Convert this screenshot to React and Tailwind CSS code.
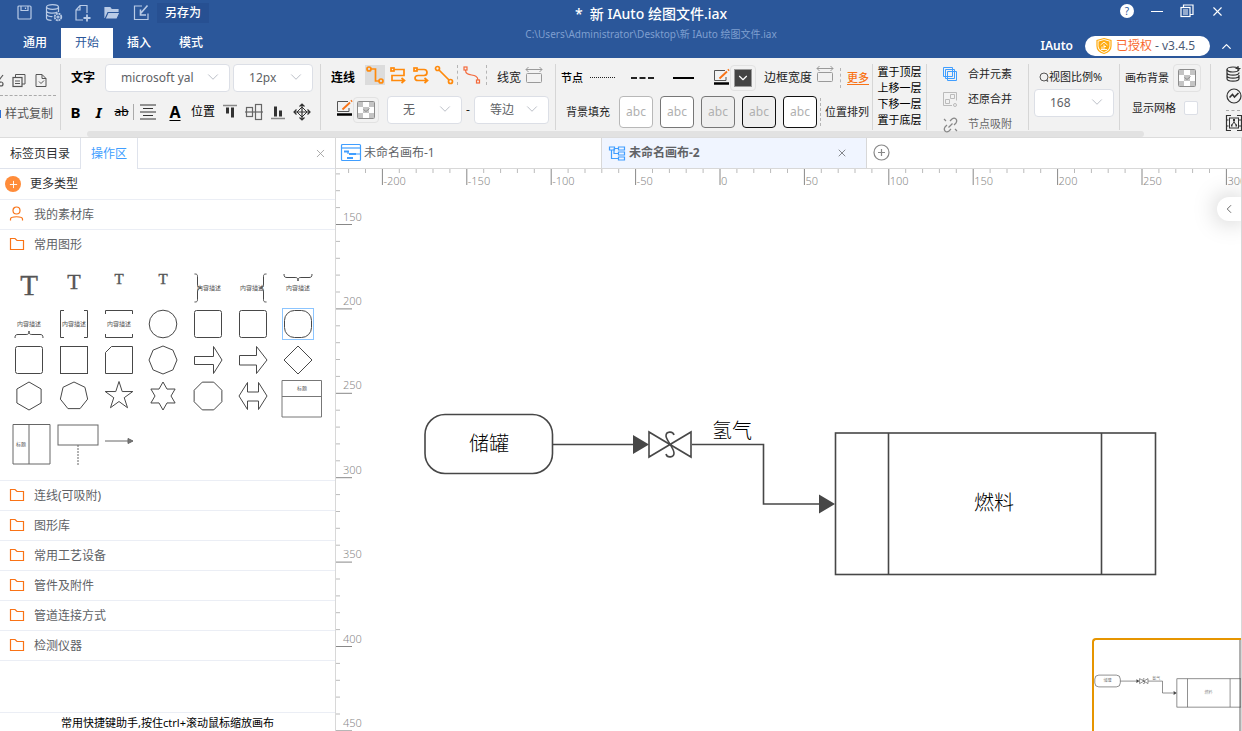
import React, { useState } from 'react'
import { ChevronDown, ChevronUp, ChevronLeft, X, Plus } from 'lucide-react'

const ORIGIN_X = 384
const SCALE = 1.688

// Small stroke icon, drawn in its own box
const Icon = ({ w = 18, h = 18, className = '', children }) => (
  <svg
    width={w}
    height={h}
    viewBox={`0 0 ${w} ${h}`}
    fill="none"
    stroke="currentColor"
    strokeWidth="1.2"
    className={`shrink-0 overflow-visible ${className}`}
    aria-hidden="true"
  >
    {children}
  </svg>
)

const Select = ({ id, label, value, options = [], className = '' }) => (
  <div className={`relative h-7 shrink-0 ${className}`}>
    <select
      id={id}
      aria-label={label}
      defaultValue={value}
      className="h-full w-full appearance-none rounded border border-[#dcdfe6] bg-white pl-[15px] text-xs leading-5 text-[#606266]"
    >
      {[value, ...options].map((o) => (
        <option key={o}>{o}</option>
      ))}
    </select>
    <ChevronDown size={18} strokeWidth={1.2} className="pointer-events-none absolute right-2 top-1 text-[#b4b9c2]" />
  </div>
)

const Group = ({ className = '', children }) => (
  <div className={`h-[66px] shrink-0 border-r border-[#d6d6d6] ${className}`}>{children}</div>
)

const DashSep = ({ className = '' }) => (
  <span className={`h-5 w-px shrink-0 border-l border-dashed border-[#b5b5b5] ${className}`} />
)

const PenIcon = () => (
  <Icon w={17} h={17}>
    <path d="M12 1.500H1.500V11.500H13V8" stroke="#555" strokeWidth="1" />
    <path d="M6.500 9.500L14 2.500" stroke="#f97316" strokeWidth="1.800" />
    <path d="M15 1.500L16 .5" stroke="#f97316" strokeWidth="1.800" />
    <path d="M1 14.500H16" stroke="#000" strokeWidth="2.500" />
  </Icon>
)

const Checker = () => (
  <Icon w={18} h={18}>
    <rect x=".5" y=".5" width="17" height="17" rx="1" fill="#fff" stroke="#8c8c8c" strokeWidth="1" />
    <path d="M1 1h5v5H1zM12 1h5v5h-5zM6 6h6v6H6zM1 12h5v5H1zM12 12h5v5h-5z" fill="#c4c4c4" stroke="none" />
    <path d="M6.500 8.500L9 10.500l3.500-3" stroke="#8c8c8c" strokeWidth="1" />
  </Icon>
)

const WidthIcon = () => (
  <Icon w={18} h={17} className="text-[#9a9a9a]">
    <path d="M1 2.500H17M3.500 0L1 2.500l2.500 2.500M14.500 0L17 2.500l-2.500 2.500" strokeWidth="1" />
    <rect x="1.500" y="6.500" width="15" height="9" rx="1" strokeWidth="1" />
  </Icon>
)

const TopBar = () => {
  const menus = ['通用', '开始', '插入', '模式']
  const [menu, setMenu] = useState('开始')
  const quick = [
    { name: '保存', icon: <><rect x="2" y="2" width="13" height="13" rx="1" /><path d="M5 2v4.500h7V2M9.500 3.500v1.500" /></> },
    { name: '数据', icon: <><ellipse cx="7.500" cy="3" rx="6" ry="2.300" /><path d="M1.500 3v11c0 1.300 2 2.300 5 2.300M13.500 3v5M1.500 7c.8 2.500 8 2.800 11 1M1.500 10.500c.8 1.700 4 2.300 6 2" /><circle cx="13" cy="13" r="3.300" strokeWidth="1.800" strokeDasharray="2 .6" /><circle cx="13" cy="13" r="1" /></> },
    { name: '新建', icon: <><path d="M9 16H2V6l4-4.500h7V9M6 1.500V6H2" /><path d="M13 10.500v7M9.500 14h7" strokeWidth="1.800" /></> },
    { name: '打开', icon: <><path d="M2 14V3.500h5l1.500 2H15V8H5z" fill="currentColor" /><path d="M2 15L5 8.500h12L14 15z" fill="currentColor" stroke="#2b579a" /></> },
    { name: '导入', icon: <><path d="M10 2H2.500v13.500H16V9.500" /><path d="M15.500 1.500L9 9M8.500 5.500v5.500h5.500" strokeWidth="1.600" /></> },
  ]
  return (
    <header className="flex h-[58px] shrink-0 bg-[#2b579a] text-white">
      <div className="flex w-[360px] shrink-0 flex-col">
        <div className="flex h-[26px] items-center pl-2.5">
          {quick.map((q) => (
            <button key={q.name} aria-label={q.name} className="flex w-[29px] justify-center text-[#b9cbe6]">
              <Icon>{q.icon}</Icon>
            </button>
          ))}
          <button className="ml-0.5 h-5 w-[52px] bg-[#275092] text-xs leading-5 font-medium">另存为</button>
        </div>
        <nav className="mt-0.5 flex flex-1 pl-[9px]">
          {menus.map((m) => (
            <button
              key={m}
              onClick={() => setMenu(m)}
              className={`w-[52px] text-xs leading-5 ${menu === m ? 'bg-white text-[#2b579a]' : 'font-medium text-white'}`}
            >
              {m}
            </button>
          ))}
        </nav>
      </div>
      <div className="min-w-0 flex-1 pt-1 text-center">
        <h1 className="truncate text-sm leading-5 font-medium whitespace-pre">*  新 IAuto 绘图文件.iax</h1>
        <p className="truncate text-[10px] leading-5 text-[#7f9fd0]">C:\Users\Administrator\Desktop\新 IAuto 绘图文件.iax</p>
      </div>
      <div className="flex w-[300px] shrink-0 flex-col">
        <div className="flex h-[22px] items-center justify-end pr-2.5">
          <button aria-label="帮助" className="flex w-[30px] justify-center">
            <span className="h-3.5 w-3.5 rounded-full bg-white text-[10px] leading-3.5 text-[#2b579a]">?</span>
          </button>
          <button aria-label="最小化" className="flex w-[30px] justify-center">
            <span className="h-px w-3 bg-white" />
          </button>
          <button aria-label="还原" className="flex w-[30px] justify-center">
            <Icon w={14} h={14}>
              <rect x="1" y="3.500" width="9" height="9" />
              <path d="M3.500 3.500V1h9.500v9.500h-3M3 6h5M3 8h5M3 10h5" />
            </Icon>
          </button>
          <button aria-label="关闭" className="flex w-[30px] justify-center">
            <X size={15} strokeWidth={1.8} />
          </button>
        </div>
        <div className="flex flex-1 items-center justify-end pt-3">
          <span className="text-xs leading-5 font-semibold">IAuto</span>
          <span className="ml-3 flex h-5 w-[125px] items-center justify-center gap-1 rounded-full bg-white pr-1 text-xs leading-5 text-[#4a5a75]">
            <Icon w={16} h={16}>
              <path d="M8 .5L15 2.500V8c0 4-3.500 6.500-7 7.500C4.500 14.500 1 12 1 8V2.500z" fill="#fff" stroke="#ffab0f" />
              <path d="M8 2L13.500 3.500V8c0 3-2.800 5-5.500 6C5.300 13 2.500 11 2.500 8V3.500z" fill="#ffab0f" stroke="none" />
              <path d="M4.500 7L8 4l3.500 3M8 6.500v5M8 8.500h2M6 8.500v3M5 11.500h6" stroke="#fff" strokeWidth=".9" />
            </Icon>
            <span>
              <span className="text-[#f9682c]">已授权</span> - v3.4.5
            </span>
          </span>
          <button aria-label="收起" className="flex w-8 justify-center">
            <ChevronUp size={15} strokeWidth={2} />
          </button>
        </div>
      </div>
    </header>
  )
}

const FORMATS = [
  { name: '顶部对齐', d: <><path d="M1 1.500h14" stroke="#888" strokeWidth="1.500" /><path d="M5.500 3.500v6M10.500 3.500v10" strokeWidth="3" /></> },
  { name: '居中对齐', d: <g stroke="#666"><rect x=".5" y="3.500" width="6" height="9" /><rect x="9.500" y=".5" width="6" height="15" /><path d="M-1 8h18" /></g> },
  { name: '底部对齐', d: <><path d="M1 14.500h14" stroke="#888" strokeWidth="1.500" /><path d="M5.500 2.500v10M10.500 6.500v6" strokeWidth="3" /></> },
  { name: '移动', d: <><path d="M8 0v16M0 8h16M5.500 2.500L8 0l2.500 2.500M5.500 13.500L8 16l2.500-2.500M2.500 5.500L0 8l2.500 2.500M13.500 5.500L16 8l-2.500 2.500" /><path d="M8 3l5 5-5 5-5-5z" strokeWidth="1" /></> },
]

const LINES = [
  { name: '折线', d: <><circle cx="3" cy="3" r="2" /><path d="M5 3h4.500v12H13" /><circle cx="15" cy="15" r="2" /></> },
  { name: '直角线', d: <><rect x="2" y="2" width="3" height="3" /><path d="M5 3.500h10v6H3v5h12M12.500 12l3 2.500-3 2.500" /></> },
  { name: '圆角线', d: <><rect x="2" y="2" width="3" height="3" /><path d="M5 3.500h7c4 0 4 6 0 6H6c-4 0-4 5 0 5h9M12.500 12l3 2.500-3 2.500" /></> },
  { name: '直线', d: <><circle cx="2.500" cy="2.500" r="2" /><path d="M4 4l10 10" /><circle cx="15.500" cy="15.500" r="2" /></> },
]

const BOXES = [
  'border-[#b8b8b8] bg-white',
  'border-[#777] bg-white',
  'border-[#777] bg-[#efefef]',
  'border-[#111] bg-[#efefef]',
  'border-[#111] bg-white',
]

const Ribbon = () => (
  <section className="shrink-0 overflow-hidden border-b border-[#dcdcdc] bg-[#f2f2f2] text-xs leading-4 text-[#222]">
    <div className="flex pt-1.5">
      <Group className="flex w-[61px] flex-col">
        <div className="mr-1 flex h-8 items-end gap-2 border-b border-dashed border-[#aaa] pb-2 text-[#555]">
          <button aria-label="剪切" className="w-1 overflow-hidden">
            <Icon w={4} h={14}><circle cx="1" cy="11" r="2" /><path d="M-4 11L3 2" /></Icon>
          </button>
          <button aria-label="复制">
            <Icon w={14} h={14}><rect x="1" y="4.500" width="9" height="9" /><path d="M3.500 4V1.500H13V11h-3M3 8h5M3 10.500h5" strokeWidth="1" /></Icon>
          </button>
          <button aria-label="粘贴">
            <Icon w={14} h={14}><path d="M2 1.500h6l4 4v8H2zM8 1.500v4h4M5 8.500l2 2 3-3" strokeWidth="1" /></Icon>
          </button>
        </div>
        <button className="mt-2.5 flex items-center text-[#555]">
          <span className="mr-1 h-2 w-px bg-[#2b6fd6]" />
          样式复制
        </button>
      </Group>

      <Group className="flex w-[260px] flex-col gap-1.5">
        <div className="flex items-center gap-[3px] pl-2.5">
          <span className="mr-[7px] font-semibold text-black">文字</span>
          <Select label="字体" value="microsoft yal" options={['宋体']} className="w-[125px]" />
          <Select label="字号" value="12px" options={['14px']} className="w-20" />
        </div>
        <div className="flex h-7 items-center pl-[3px] text-[#333]">
          <button className="w-[23px] text-[15px] font-bold text-black">B</button>
          <button className="w-[23px] text-[15px] font-bold text-black italic">I</button>
          <button className="w-[23px] text-xs text-black line-through">ab</button>
          <span className="h-4 w-px bg-[#aaa]" />
          <button aria-label="对齐" className="flex w-7 justify-center">
            <Icon w={16} h={16}><path d="M0 1h16M3 4.500h10M0 8h16M3 11.500h10M0 15h16" /></Icon>
          </button>
          <button className="w-[26px] text-base font-bold text-black underline underline-offset-2">A</button>
          <span className="w-[30px] text-center text-black">位置</span>
          {FORMATS.map((f) => (
            <button key={f.name} aria-label={f.name} className="flex w-6 justify-center">
              <Icon w={16} h={16}>{f.d}</Icon>
            </button>
          ))}
        </div>
      </Group>

      <Group className="flex w-[235px] flex-col gap-1">
        <div className="flex h-7 items-center pl-2.5">
          <span className="mr-2.5 font-semibold text-black">连线</span>
          {LINES.map((l, i) => (
            <button
              key={l.name}
              aria-label={l.name}
              className={`mr-[3px] mb-1.5 flex h-5 w-5 items-center justify-center text-[#ff8a0c] ${i === 0 ? 'bg-[#dcdcdc]' : ''}`}
            >
              <Icon className="[stroke-width:1.700]">{l.d}</Icon>
            </button>
          ))}
          <DashSep className="mb-1.5" />
          <button aria-label="曲线" className="mx-1 mb-1.5 flex w-5 justify-center text-[#f4693b]">
            <Icon><rect x="1" y="1" width="3" height="3" /><path d="M2.500 4c0 8 12 2 12.500 10" /><rect x="13.500" y="14" width="3" height="3" /></Icon>
          </button>
          <DashSep className="mb-1.5" />
          <span className="mr-1 ml-2.5">线宽</span>
          <button aria-label="线宽" className="mb-1.5"><WidthIcon /></button>
        </div>
        <div className="flex items-center pl-[15px]">
          <button aria-label="线条颜色" className="mb-1"><PenIcon /></button>
          <button aria-label="填充" className="flex h-[26px] w-[26px] items-center justify-center rounded border border-[#e2e2e2]">
            <Checker />
          </button>
          <Select label="起点" value="无" options={['箭头']} className="ml-2 w-[75px]" />
          <span className="w-3 text-center">-</span>
          <Select label="终点" value="等边" options={['无']} className="w-[75px]" />
        </div>
      </Group>

      <Group className="flex w-[317px] flex-col gap-1">
        <div className="flex h-[27px] items-center pl-[5px]">
          <span className="w-[29px] text-[11px] font-medium text-black">节点</span>
          <button aria-label="点线" className="w-[25px] border-t border-dotted border-[#222]" />
          <button aria-label="虚线" className="ml-4 w-[23px] border-t-2 border-dashed border-[#222]" />
          <button aria-label="实线" className="ml-[19px] w-[21px] border-t-2 border-black" />
          <span className="w-[19px]" />
          <button aria-label="边框颜色"><PenIcon /></button>
          <button aria-label="颜色" className="flex h-[26px] w-[26px] items-center justify-center rounded border border-[#e2e2e2]">
            <span className="flex h-[18px] w-[18px] items-center justify-center border border-[#999] bg-[#444] text-white">
              <ChevronDown size={14} />
            </span>
          </button>
          <span className="mr-1 ml-2">边框宽度</span>
          <button aria-label="边框宽度" className="mb-1.5"><WidthIcon /></button>
          <DashSep className="mx-1.5 h-4" />
          <a href="#more" className="text-[11px] font-medium text-[#f97316] underline underline-offset-2">更多</a>
        </div>
        <div className="flex items-center pt-px pl-2.5 text-[11px]">
          <span className="mr-[9px]">背景填充</span>
          <div className="flex gap-[7px]">
            {BOXES.map((b, i) => (
              <button key={i} className={`h-8 w-[34px] rounded border text-xs text-[#b0b0b0] ${b}`}>abc</button>
            ))}
          </div>
          <DashSep className="mr-1 ml-[3px] h-7" />
          <span className="shrink-0">位置排列</span>
        </div>
      </Group>

      <Group className="flex w-[54px] flex-col items-center text-[11px]">
        {['置于顶层', '上移一层', '下移一层', '置于底层'].map((t) => (
          <button key={t} className="h-4 text-black">{t}</button>
        ))}
      </Group>

      <Group className="flex w-[102px] flex-col gap-[9px] pt-0.5 pl-4 text-[11px]">
        <button className="flex h-4 items-center gap-2.5">
          <Icon w={15} h={15} className="text-[#409eff]">
            <path d="M.5 .5h9v9h-9zM2.500 2.500h9v9h-9zM4.500 4.500h9v9h-9z" strokeWidth="1" />
          </Icon>
          合并元素
        </button>
        <button className="flex h-4 items-center gap-2.5">
          <Icon w={15} h={15} className="text-[#bbb]">
            <path d="M9 13.500H.5V.5h13v8M2.500 7.500h4v4h-4zM7.500 2.500h4v4h-4z" strokeWidth="1" />
            <circle cx="12" cy="13" r="1.500" strokeWidth="1" />
          </Icon>
          还原合并
        </button>
        <button className="flex h-4 items-center gap-2.5 text-[#666]">
          <Icon w={15} h={15} className="text-[#888]">
            <path d="M7 4l2-2c3-2.500 6 1 4 4l-2 2M8 12l-2 2c-3 2.500-6-1-4-4l2-2M5.500 10.500l4-4M1 2l2 2M12 12l2 2" />
          </Icon>
          节点吸附
        </button>
      </Group>

      <Group className="flex w-[91px] flex-col pl-[5px] text-[11px]">
        <label htmlFor="zoom" className="flex h-[25px] items-center pl-[5px]">
          <Icon w={10} h={10} className="text-[#555]"><circle cx="5" cy="5" r="4" strokeWidth="1" /><path d="M7.500 8L9 9.500" /></Icon>
          视图比例%
        </label>
        <Select id="zoom" label="视图比例%" value="168" options={['100']} className="w-20" />
      </Group>

      <Group className="flex w-[91px] flex-col gap-2 pl-[5px] text-[11px]">
        <div className="flex items-center gap-1">
          画布背景
          <button aria-label="画布背景" className="flex h-7 w-7 items-center justify-center rounded border border-[#e2e2e2]">
            <Checker />
          </button>
        </div>
        <label className="flex items-center gap-2 pl-[7px]">
          显示网格
          <input type="checkbox" className="h-3.5 w-3.5 appearance-none rounded-xs border border-[#dcdfe6] bg-white" />
        </label>
      </Group>

      <div className="flex w-10 shrink-0 flex-col gap-1.5 pl-[15px] text-[#333]">
        <button aria-label="数据源" className="mt-0.5">
          <Icon w={16} h={16}><ellipse cx="7" cy="3.500" rx="6" ry="2.500" /><path d="M1 3.500v9c0 3.500 12 3.500 12 0V9M1 6.500c0 3.500 12 3.500 12 0M1 9.500c0 3.500 12 3.500 12 0M12 0v5M9.500 2.500h5" /></Icon>
        </button>
        <button aria-label="图表">
          <Icon w={16} h={16}><circle cx="8" cy="8" r="7" /><path d="M3.500 9.500l3-3 2 2.500 4-4" strokeWidth="1.600" /></Icon>
        </button>
        <button aria-label="组件" className="border-t border-dashed border-[#aaa] pt-1">
          <Icon w={16} h={16}><path d="M5 .5H.5v15h4.500M11 .5h4.500v15h-4.500M.5 5h2M.5 11h2M13 5h2M13 11h2" /><rect x="3.500" y="3" width="9" height="10" strokeWidth="1" /><path d="M8 5v2M5.500 10.500L8 7l2.500 3.500" strokeWidth="1" /><path d="M7 5h2M5 10.500h1.500M9.500 10.500H11" strokeWidth="2" /></Icon>
        </button>
      </div>
    </div>
    <div className="ml-[87px] h-[6px] w-[1057px] rounded-full bg-[#e2e2e2]" />
  </section>
)

// Regular polygon points around the middle of a 36px tile
const poly = (n, r = 14, start = -90) =>
  Array.from({ length: n }, (_, i) => {
    const a = ((start + (360 / n) * i) * Math.PI) / 180
    return `${(18 + r * Math.cos(a)).toFixed(2)},${(18 + r * Math.sin(a)).toFixed(2)}`
  }).join(' ')

const star = (n, r, inner) =>
  Array.from({ length: n * 2 }, (_, i) => {
    const a = ((-90 + (180 / n) * i) * Math.PI) / 180
    const k = i % 2 ? inner : r
    return `${(18 + k * Math.cos(a)).toFixed(2)},${(18 + k * Math.sin(a)).toFixed(2)}`
  }).join(' ')

const Letter = ({ size, y }) => (
  <text x="18" y={y} fontSize={size} textAnchor="middle" fill="#555" stroke="#555" strokeWidth=".4" fontFamily="Liberation Serif, serif">T</text>
)

const Tiny = ({ x = 18, y = 20, size = 6, children = '内容描述' }) => (
  <text x={x} y={y} fontSize={size} textAnchor="middle" fill="#555" stroke="none">{children}</text>
)

const SHAPES = [
  <Letter size="29" y="25" />,
  <Letter size="22" y="19" />,
  <Letter size="15" y="14" />,
  <Letter size="15" y="14" />,
  <><path d="M4.500 4c3 0 3 1 3 3v7c0 3 1 4 4 4-3 0-4 1-4 4v7c0 2 0 3-3 3" /><Tiny x="19" /></>,
  <><path d="M31.500 4c-3 0-3 1-3 3v7c0 3-1 4-4 4 3 0 4 1 4 4v7c0 2 0 3 3 3" /><Tiny x="17" /></>,
  <><path d="M4 4c0 3 1 3.500 3 3.500h7c3 0 4 0 4 3.500 0-3.500 1-3.500 4-3.500h7c2 0 3-.5 3-3.500" /><Tiny /></>,
  <><path d="M4 32c0-3 1-3.500 3-3.500h7c3 0 4 0 4-3.500 0 3.500 1 3.500 4 3.500h7c2 0 3 .5 3 3.500" /><Tiny /></>,
  <><path d="M8 4.500H4.500v27H8M28 4.500h3.500v27H28" /><Tiny /></>,
  <><path d="M4.500 8V4.500h27V8M4.500 28v3.500h27V28" /><Tiny /></>,
  <circle cx="18" cy="18" r="13.800" />,
  <rect x="4.500" y="4.500" width="27" height="27" rx="2" />,
  <rect x="4.500" y="4.500" width="27" height="27" rx="2" />,
  <><rect x="2.500" y="2.500" width="31" height="31" stroke="#8cc5ff" /><rect x="4.500" y="4.500" width="27" height="27" rx="10" /></>,
  <rect x="4.500" y="4.500" width="27" height="27" rx="2" />,
  <rect x="4.500" y="4.500" width="27" height="27" />,
  <path d="M4.500 10.500l6-6h21v27h-27z" />,
  <polygon points={poly(8)} />,
  <path d="M4.500 14.500h19V4.500l8.500 13.500-8.500 13.500v-9h-19z" />,
  <path d="M4.500 13.500h17V4.500l10.500 13.500-10.500 13.500v-8.500h-17z" />,
  <polygon points={poly(4)} />,
  <polygon points={poly(6)} />,
  <polygon points={poly(7)} />,
  <polygon points={star(5, 14.5, 5.5)} />,
  <polygon points={star(6, 14, 8)} />,
  <polygon points={poly(8, 15, -67.5)} />,
  <path d="M4 18L12.500 4.500v9.500h11V4.500L32 18l-8.500 13.500v-8.500h-11v8.500z" />,
  <><path d="M2 2.500h39.500v36.500H2zM2 18.500h39.500" stroke="#777" /><Tiny x="22" y="12" size={5}>标题</Tiny></>,
]

const LAST_SHAPES = [
  <><path d="M2 1.500h37v39.500H2zM18 1.500V41" /><Tiny x="10" y="23" size={5}>标题</Tiny></>,
  <><rect x="2" y="2" width="40" height="20" /><path d="M22 22v20" strokeDasharray="2 1" /></>,
  <><path d="M4 18h26" /><path d="M27 15.500l5 2.500-5 2.500z" fill="#777" /></>,
]

const Folder = () => (
  <Icon w={16} h={14} className="mb-0.5 text-[#f97316]"><path d="M1.500 1.500h4.500l2 2h6.500v9H1.500z" /></Icon>
)

const Sidebar = () => {
  const groups = ['连线(可吸附)', '图形库', '常用工艺设备', '管件及附件', '管道连接方式', '检测仪器']
  return (
    <aside className="flex w-[336px] shrink-0 flex-col border-r border-[#d8d8d8] bg-white text-xs leading-4">
      <div className="flex h-[31px] shrink-0 border-b border-[#dfe3ec]">
        <button className="border-r border-[#dfe3ec] px-2.5 pt-px text-[#303133]">标签页目录</button>
        <button className="-mb-px w-[57px] border-r border-[#dfe3ec] bg-white text-center text-[#409eff]">操作区</button>
        <button aria-label="关闭面板" className="mr-2 ml-auto text-[#999]">
          <X size={13} strokeWidth={1.5} />
        </button>
      </div>
      <button className="flex h-[31px] shrink-0 items-center gap-[9px] border-b border-[#ebeef5] pl-[5px] text-[#303133]">
        <span className="flex h-4 w-4 items-center justify-center rounded-full bg-[#ff8c3a] text-white">
          <Plus size={11} strokeWidth={2} />
        </span>
        更多类型
      </button>
      <button className="flex h-[30px] shrink-0 items-center gap-2.5 border-b border-[#ebeef5] pl-2 text-[#606266]">
        <Icon w={16} h={16} className="mb-0.5 text-[#f97316]"><circle cx="8.500" cy="4.500" r="3.500" /><path d="M2.500 14.500V13c0-3 12-3 12 0v1.500" /></Icon>
        我的素材库
      </button>
      <div className="shrink-0 border-b border-[#ebeef5] pb-2">
        <button className="flex h-[30px] w-full items-center gap-[9px] pl-[9px] text-[#606266]">
          <Folder />
          常用图形
        </button>
        <div className="grid grid-cols-7 pt-2.5 pr-[15px] pl-[7px]">
          {SHAPES.map((s, i) => (
            <button key={i} aria-label={`图形 ${i + 1}`} className="flex h-9 justify-center text-[#484848]">
              <Icon w={36} h={36} className="[stroke-width:1]">{s}</Icon>
            </button>
          ))}
          {LAST_SHAPES.map((s, i) => (
            <button key={i} aria-label={`组合 ${i + 1}`} className="flex h-[58px] items-center justify-center text-[#666]">
              <Icon w={36} h={40} className="[stroke-width:1]">{s}</Icon>
            </button>
          ))}
        </div>
      </div>
      {groups.map((g) => (
        <button key={g} className="flex h-[30px] shrink-0 items-center gap-[9px] border-b border-[#ebeef5] pl-[9px] text-[#606266]">
          <Folder />
          {g}
        </button>
      ))}
      <p className="mt-auto border-t border-[#ebeef5] pt-0.5 text-center text-[11px] leading-4 text-black">
        常用快捷键助手,按住ctrl+滚动鼠标缩放画布
      </p>
    </aside>
  )
}

const Rulers = () => {
  const xs = Array.from({ length: 53 }, (_, i) => -220 + i * 10)
  const ys = Array.from({ length: 34 }, (_, i) => 120 + i * 10)
  return (
    <g fontSize="11" fill="#8a8a8a" fontWeight="300">
      {xs.map((v) => {
        const x = ORIGIN_X + v * SCALE
        const major = v % 50 === 0
        return (
          <g key={v}>
            <path d={`M${x.toFixed(1)} 0v${major ? 16 : 4}`} stroke={major ? '#888' : '#bbb'} />
            {major && <text x={x + 1} y="16">{v}</text>}
          </g>
        )
      })}
      {ys.map((v) => {
        const y = 55.5 + (v - 150) * SCALE
        const major = v % 50 === 0
        return (
          <g key={v}>
            <path d={`M0 ${y.toFixed(1)}h${major ? 16 : 4}`} stroke={major ? '#888' : '#bbb'} />
            {major && <text x="7" y={y - 4}>{v}</text>}
          </g>
        )
      })}
    </g>
  )
}

const Diagram = ({ stroke = 1.6, ink = '#000' }) => (
  <g stroke="#474747" strokeWidth={stroke} fill="none">
    <rect x="89" y="245.500" width="127.500" height="59" rx="20" />
    <path d="M217 275.500h80M356 275.500h71.500v59.500h56" />
    <path d="M297 266l16 9.500-16 9.500zM483 325.500l16 9.500-16 9.500z" fill="#474747" stroke="none" />
    <path d="M313 263v25l42-25v25z" />
    <path d="M338 266c-1-4-8-4-8 1 0 4 8 12 8 17 0 5-7 5-8 1" />
    <rect x="499.500" y="264" width="320" height="141.500" />
    <path d="M552.500 264v141.500M765.500 264v141.500" />
    <g fill={ink} stroke="none" fontSize="20" fontWeight="300" textAnchor="middle">
      <text x="153" y="282">储罐</text>
      <text x="396" y="269">氢气</text>
      <text x="658" y="341">燃料</text>
    </g>
  </g>
)

const Workspace = () => (
  <main className="flex min-w-0 flex-1 flex-col border-r border-[#d8d8d8] bg-white">
    <div className="flex h-[31px] shrink-0 items-stretch border-b border-[#d8d8d8] text-xs leading-4 text-[#606266]">
      <button className="flex w-[266px] shrink-0 items-center gap-[3px] border-r border-[#d8d8d8] pl-[5px]">
        <Icon w={20} h={18} className="text-[#409eff]">
          <rect x=".5" y=".5" width="19" height="16" rx="1" />
          <path d="M1 4h18" />
          <path d="M3 7.500h5M8 10h7M6 14h6" strokeWidth="2" />
          <path d="M7 7.500v2.500M14 10h5" />
        </Icon>
        未命名画布-1
      </button>
      <div className="flex w-[265px] shrink-0 items-center border-r border-[#d8d8d8] bg-[#f0f5ff] pl-[7px]">
        <button className="flex items-center gap-[3px] font-bold">
          <Icon w={17} h={15} className="text-[#409eff]">
            <path d="M.5 1h5v3h-5zM9.500 1h6v3h-6zM9.500 6h6v3h-6zM9.500 11h6v3h-6zM5.500 2.500h4M2.500 4v8.500h7M5 2.500v5h4.500" />
          </Icon>
          未命名画布-2
        </button>
        <button aria-label="关闭画布" className="mr-[18px] ml-auto">
          <X size={12} strokeWidth={1.5} />
        </button>
      </div>
      <button aria-label="新建画布" className="ml-1.5 flex items-center pb-px text-[#888]">
        <Icon w={17} h={17}><circle cx="8.500" cy="8.500" r="7.500" /><path d="M8.500 5v7M5 8.500h7" /></Icon>
      </button>
    </div>
    <div className="relative flex-1 overflow-hidden">
      <svg className="block h-full w-full">
        <Rulers />
        <Diagram />
      </svg>
      <button
        aria-label="展开属性"
        className="absolute top-7 right-0 flex h-6 w-6 items-center justify-center rounded-l-full bg-white text-[#555] shadow-[0_0_24px_rgba(0,0,0,0.25)]"
      >
        <ChevronLeft size={14} strokeWidth={1.5} />
      </button>
      <div className="absolute right-0 bottom-0 h-[93px] w-[149px] rounded-tl border-t-2 border-l-2 border-t-[#e69500] border-l-[#e69500] bg-white">
        <svg className="block h-full w-full">
          <path d="M146 0v91" stroke="#b0b0b0" strokeWidth="2" />
          <g transform="translate(-17 -14) scale(.2)">
            <Diagram stroke={3} ink="#555" />
          </g>
        </svg>
      </div>
    </div>
  </main>
)

const App = () => {
  return (
    <div className="flex h-screen flex-col overflow-hidden bg-white font-['Noto_Sans','Noto_Sans_CJK_SC',sans-serif]">
      <TopBar />
      <Ribbon />
      <div className="flex min-h-0 flex-1">
        <Sidebar />
        <Workspace />
      </div>
    </div>
  )
}

export default App
